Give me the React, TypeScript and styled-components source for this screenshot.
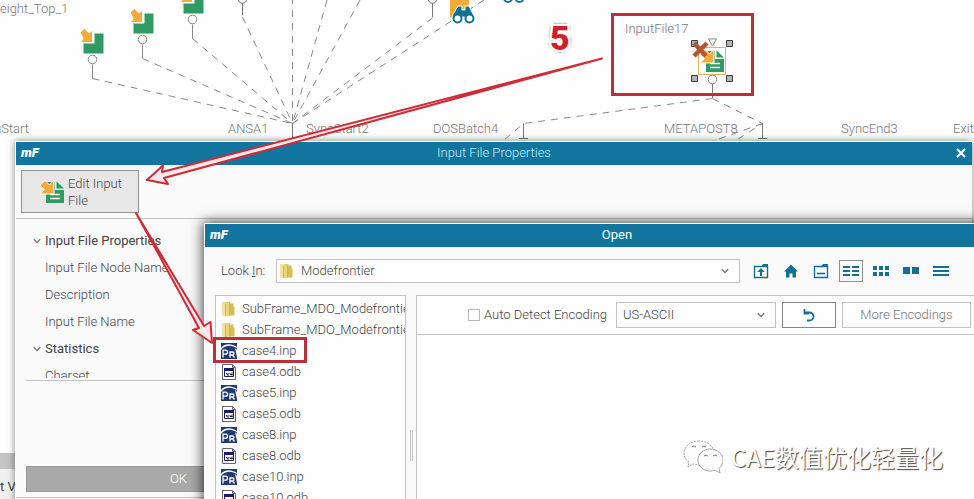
import React from "react";
import styled, { createGlobalStyle, css } from "styled-components";

const teal = "#12759e";
const iconTeal = "#146f94";
const line = "#c3c3c6";
const red = "#b9303a";

const GlobalStyle = createGlobalStyle`
  *, *::before, *::after { box-sizing: border-box; }
  html, body, #root { height: 100%; }
  body {
    margin: 0;
    overflow: hidden;
    background: #fefefe;
    color: #444;
    font: 300 13px/20px Roboto, "Liberation Sans", sans-serif;
  }
  button, select, input { font: inherit; color: inherit; }
  svg { flex: none; }
`;

const Desktop = styled.main`
  position: relative;
  width: 100%;
  height: 100%;
  overflow: hidden;
`;

const Diagram = styled.svg`
  position: absolute;
  top: 0;
  left: 0;
  width: 1200px;
  height: 142px;
`;

const NodeLabel = styled.span<{ $x: number; $y: number }>`
  position: absolute;
  left: ${(p) => p.$x}px;
  top: ${(p) => p.$y}px;
  color: #777;
  white-space: nowrap;
`;

const DockedTab = styled.div`
  position: absolute;
  left: 0;
  top: 453px;
  bottom: 0;
  width: 60px;
  padding-top: 8px;
  border-top: 16px solid #c4c4c4;
  background: #f0f0f0;
  font-weight: 400;
`;

const Window = styled.section<{ $x: number; $y: number; $right: number; $dark?: boolean }>`
  position: absolute;
  left: ${(p) => p.$x}px;
  top: ${(p) => p.$y}px;
  right: ${(p) => p.$right}px;
  bottom: -16px;
  display: flex;
  flex-direction: column;
  border-left: 1px solid #fff;
  border-top: 1px solid #fff;
  background: #fafafa;
  box-shadow: ${(p) => (p.$dark ? "0 0 12px 1px rgba(0,0,0,.75)" : "0 0 7px rgba(0,0,0,.5)")};
`;

const TitleBar = styled.header`
  display: grid;
  grid-template-columns: 40px 1fr 40px;
  align-items: center;
  flex: none;
  height: 23px;
  padding-bottom: 1px;
  background: ${teal};
  color: #fff;
`;

const Brand = styled.span`
  padding-left: 5px;
  font: italic 900 13px/20px Roboto, sans-serif;
`;

const Title = styled.h1<{ $muted?: boolean }>`
  margin: 0;
  text-align: center;
  font-size: 13px;
  font-weight: ${(p) => (p.$muted ? 300 : 400)};
  color: ${(p) => (p.$muted ? "#c4ebf4" : "#fff")};
`;

const CloseButton = styled.button`
  display: flex;
  justify-self: end;
  margin-right: 6px;
  padding: 0;
  border: 0;
  background: none;
  color: #fff;
`;

const ActionBar = styled.div`
  flex: none;
  padding: 5px;
  border-bottom: 1px solid ${line};
`;

const EditButton = styled.button`
  display: flex;
  align-items: center;
  gap: 3px;
  width: 118px;
  height: 43px;
  padding: 0 0 0 18px;
  border: 1px solid #919191;
  background: #e7e7e7;
  text-align: left;
  line-height: 17px;
  white-space: nowrap;
`;

const PropertyList = styled.div`
  flex: none;
  display: flex;
  flex-direction: column;
  height: 159px;
  margin: 0 10px;
  padding-top: 8px;
  overflow: hidden;
`;

const Divider = styled.hr`
  flex: none;
  width: auto;
  margin: 2px 10px 0;
  border: 0;
  border-top: 1px solid ${line};
`;

const PropertyRow = styled.div<{ $group?: boolean }>`
  display: flex;
  flex: none;
  align-items: center;
  gap: 4px;
  height: 27px;
  padding-left: ${(p) => (p.$group ? 7 : 19)}px;
  ${(p) => p.$group && css`font-weight: 400;`}
`;

const OkButton = styled.button`
  flex: none;
  height: 26px;
  margin: 85px 10px 0;
  padding: 0 0 0 143px;
  border: 1px solid #999;
  background: #aaa9aa;
  color: #fff;
  text-align: left;
`;

const StatusLine = styled.div`
  flex: none;
  margin-top: 5px;
  border-top: 1px solid ${line};
`;

const LookInBar = styled.div`
  display: flex;
  align-items: center;
  flex: none;
  height: 48px;
  padding-left: 16px;
`;

const LookInLabel = styled.label`
  width: 55px;
`;

const SelectFrame = styled.div<{ $grow?: boolean }>`
  display: flex;
  align-items: center;
  flex: ${(p) => (p.$grow ? "1 1 auto" : "none")};
  width: ${(p) => (p.$grow ? "auto" : "160px")};
  height: ${(p) => (p.$grow ? 24 : 26)}px;
  padding: 0 10px 0 ${(p) => (p.$grow ? 1 : 6)}px;
  gap: 5px;
  border: 1px solid ${line};
  background: #fefefe;
`;

const PlainSelect = styled.select`
  flex: 1;
  min-width: 0;
  padding: 0;
  border: 0;
  outline: 0;
  background: none;
  appearance: none;
`;

const Toolbar = styled.div`
  display: flex;
  gap: 6px;
  flex: none;
  margin: 0 76px 0 9px;
`;

const ToolButton = styled.button<{ $active?: boolean }>`
  display: flex;
  align-items: center;
  justify-content: center;
  width: 24px;
  height: 22px;
  padding: 0;
  border: 1px solid ${(p) => (p.$active ? "#8f8f8f" : "transparent")};
  background: none;
  color: ${iconTeal};
`;

const Panes = styled.div`
  display: flex;
  flex: 1;
  min-height: 0;
  padding-left: 10px;
`;

const FileList = styled.ul`
  flex: none;
  width: 191px;
  margin: 0;
  padding: 2px 0 0 4px;
  border: 1px solid ${line};
  background: #fefefe;
  list-style: none;
  overflow: hidden;
`;

const FileRow = styled.li`
  display: flex;
  align-items: center;
  gap: 4px;
  height: 21px;
  white-space: nowrap;
`;

const Splitter = styled.div`
  display: flex;
  align-items: center;
  justify-content: center;
  width: 10px;

  &::before {
    content: "";
    width: 3px;
    height: 31px;
    margin-top: 80px;
    border: solid ${line};
    border-width: 0 1px;
  }
`;

const Preview = styled.div`
  flex: 1;
  min-width: 0;
  border: 1px solid ${line};
  border-right: 0;
  background: #fefefe;
`;

const EncodingBar = styled.div`
  display: flex;
  align-items: center;
  justify-content: flex-end;
  gap: 6px;
  height: 39px;
  padding-right: 58px;
  border-bottom: 1px solid ${line};
`;

const CheckLabel = styled.label`
  display: flex;
  align-items: center;
  gap: 4px;
  margin-right: 3px;
`;

const CheckBox = styled.input`
  appearance: none;
  width: 12px;
  height: 12px;
  margin: 0;
  border: 1px solid #b9b9b9;
  background: #fff;
`;

const PushButton = styled.button<{ $wide?: boolean }>`
  display: flex;
  align-items: center;
  justify-content: center;
  width: ${(p) => (p.$wide ? 129 : 54)}px;
  height: 26px;
  padding: 0;
  border: 1px solid ${(p) => (p.$wide ? line : "#858585")};
  background: #fefefe;
  color: ${(p) => (p.$wide ? "#777" : iconTeal)};
`;

const Overlay = styled.svg`
  position: absolute;
  inset: 0;
  width: 100%;
  height: 100%;
  pointer-events: none;
`;

const Callout = styled.span`
  position: absolute;
  left: 550px;
  top: 18px;
  color: #d21f2b;
  font: 900 34px/40px Roboto, sans-serif;
  text-shadow: 2px 0 0 #fff, -2px 0 0 #fff, 0 2px 0 #fff, 0 -2px 0 #fff,
    2px 2px 0 #fff, -2px 2px 0 #fff, 2px -2px 0 #fff, -2px -2px 0 #fff,
    3px 0 2px #b9b6cc, -3px 0 2px #b9b6cc, 0 3px 2px #b9b6cc, 0 -3px 2px #b9b6cc;
`;

const Watermark = styled.div`
  position: absolute;
  right: 31px;
  bottom: 22px;
  display: flex;
  align-items: center;
  gap: 8px;
  color: #fdfdfd;
  font: 400 24px/40px "Noto Sans CJK SC", sans-serif;
  text-shadow: 1px 1px 1px #444;
`;

const Chevron = ({ size = 8 }: { size?: number }) => (
  <svg width={size} height={size} viewBox="0 0 8 8" fill="none" stroke="#777" strokeWidth="1.3" aria-hidden>
    <path d="M.8 2.3 4 5.5 7.2 2.3" />
  </svg>
);

const Folder = () => (
  <svg width="18" height="18" viewBox="0 0 18 18" aria-hidden>
    <path d="M9 3.500h4.500v3h1v9H9z" fill="#d8bd55" />
    <path d="M2.500 2h7v13.500h-7z" fill="#e6cf70" />
    <path d="M2.500 2h3v13.500h-3z" fill="#f2e39c" />
    <path d="M5.500 3.500 9.500 2v13l-4 1.500z" fill="#e9d57e" />
    <path d="M9.500 2v13.500M5.500 3.500v12.500" stroke="#c8a945" fill="none" strokeWidth=".7" />
  </svg>
);

const InpIcon = () => (
  <svg width="18" height="18" viewBox="0 0 18 18" aria-hidden>
    <path d="M1 1h16v16H1z" fill="#203a70" />
    <path d="M1 6C4 1.500 11 1 17 5v1.500C12 2.500 5 3 1 8z" fill="#fff" />
    <path d="M15 6 17 8v7z" fill="#fff" />
    <g fill="none" stroke="#fff" strokeWidth="1.3">
      <path d="M3 15.500V8.200h2.500a2 2 0 0 1 0 4H3" />
      <path d="M10 15.500V10h2.500a1.500 1.500 0 0 1 0 3H10M12.500 13l2 2.500" />
    </g>
  </svg>
);

const OdbIcon = () => (
  <svg width="18" height="18" viewBox="0 0 18 18" aria-hidden>
    <path d="M2.500 1.500h10l3 3v12h-13z" fill="#fff" stroke="#666" />
    <path d="M12.500 1.500v3h3" fill="none" stroke="#666" />
    <path d="M4.500 5.500h9v8h-9z" fill="#fff" stroke="#181a70" />
    <path d="M4 5h10v3H4z" fill="#181a70" />
    <path d="M6 10l2 2.500M8 10v2.500M10 10v1.500h2.500M12 9.500v3" stroke="#222" fill="none" />
  </svg>
);

const DocArt = () => (
  <>
    <path d="M6 3h9v8h9v13H6z" fill="#2f9a63" />
    <path d="M16.500 2.500 24 9.500h-7.500z" fill="#2f9a63" />
    <path d="M10 15.500h10M10 19.500h10" stroke="#fff" strokeWidth="1.300" />
    <path d="M0 6 5 1.500l4.500 4.500L14 1v14H0l4.500-4.500z" fill="#f1ab38" stroke="#fff" />
  </>
);

const InputDocIcon = () => (
  <svg width="25" height="26" viewBox="0 0 25 26" aria-hidden>
    <DocArt />
  </svg>
);

const InputNode = ({ x, y }: { x: number; y: number }) => (
  <g transform={`translate(${x} ${y})`}>
    <path d="M-9-26h20v20H-9z" fill="#2f9a63" />
    <path d="M-9-27H2v11H-9z" fill="#fefefe" />
    <path d="m-12-27 4-3.500L-3.500-26-.5-28.500V-17.500h-11l3-3.500z" fill="#f1ab38" />
    <circle r="4.300" fill="#fff" stroke="#888" />
    <path d="M0 5v14" stroke="#888" />
  </g>
);

const Workflow = () => (
  <Diagram viewBox="0 0 1200 142" aria-hidden>
    <g fill="none" stroke="#8b8b8b" strokeDasharray="7 6">
      <path d="M92.500 78.500 292.500 123.500" />
      <path d="M142.500 58.500 292.500 123.500" />
      <path d="M192.500 38.500 292.500 123.500" />
      <path d="M242.500 17 292.500 123.500" />
      <path d="M292.500-3V123.500" />
      <path d="M327 0 292.500 123.500" />
      <path d="M360 0 292.500 123.500" />
      <path d="M432.500 18 292.500 123.500" />
      <path d="M484 0 292.500 123.500" />
      <path d="M712.500 98.500 523.500 123.500 504 140" />
      <path d="M712.500 98.500 762.500 123.500 735 141" />
      <path d="M762.500 123.500 716 140" />
    </g>
    <g fill="none" stroke="#777">
      <path d="M292.500 123.500V142" />
      <path d="M523.500 123.500V138.500M519 138.500h9" />
      <path d="M762.500 123.500V138.500M758 138.500h9" />
      <path d="M242.500 3v12M432.500 3v14" />
      <circle cx="242.500" cy="-1" r="4.300" />
      <circle cx="432.500" cy="-1" r="4.300" />
    </g>
    <InputNode x={92.5} y={59.5} />
    <InputNode x={142.5} y={39.5} />
    <InputNode x={192.5} y={19.5} />
    <path d="M450 0h19v7l-19 11z" fill="#f1ab38" />
    <g fill="#146f94" stroke="#fff">
      <path d="M458 6h4v4h3V6h4l5 10-2 4-8-3h-2l-8 3-2-4z" />
      <g fill="#fff" stroke="#146f94" strokeWidth="2">
        <circle cx="457.500" cy="18.500" r="4" />
        <circle cx="469.500" cy="18.500" r="4" />
        <circle cx="508" cy="-2" r="4" />
        <circle cx="519.500" cy="-2" r="4" />
      </g>
    </g>
    <path d="M712.500 84v14" stroke="#777" />
    <g transform="translate(700 48)">
      <DocArt />
    </g>
    <path d="M698.500 47.500h27v27h-27z" fill="none" stroke="#e3b355" />
    <path d="M708.500 39h8l-4 7z" fill="#fff" stroke="#888" />
    <circle cx="712.500" cy="79.500" r="4.300" fill="#fff" stroke="#888" />
    <g fill="#b4b4b4" stroke="#3c3c3c">
      <path d="M691.500 40.500h6v6h-6zM726.500 40.500h6v6h-6zM691.500 75.500h6v6h-6zM726.500 75.500h6v6h-6z" />
    </g>
    <path d="m694 43 12 13M707 43l-13 13" stroke="#b65332" strokeWidth="4.500" />
  </Diagram>
);

const UpFolder = () => (
  <svg width="16" height="16" viewBox="0 0 16 16" fill="none" stroke="currentColor" aria-hidden>
    <path d="M1.500 3.500h13v11h-13z" strokeWidth="1.400" />
    <path d="M8 4 10 1h5v3z" fill="currentColor" stroke="none" />
    <path d="M8 13V8" strokeWidth="2" />
    <path d="M4.300 9 8 5l3.700 4z" fill="currentColor" stroke="none" />
  </svg>
);
const Home = () => (
  <svg width="16" height="16" viewBox="0 0 16 16" fill="currentColor" aria-hidden>
    <path d="m8 1.500 7 7h-2v6H9.500v-4h-3v4H3v-6H1z" />
  </svg>
);
const NewFolder = () => (
  <svg width="16" height="16" viewBox="0 0 16 16" fill="none" stroke="currentColor" aria-hidden>
    <path d="M1.500 3.500h13v11h-13z" strokeWidth="1.400" />
    <path d="M8 4 10 1h5v3z" fill="currentColor" stroke="none" />
    <path d="M4 10.500h8" strokeWidth="1.600" />
  </svg>
);
const Details = () => (
  <svg width="18" height="14" viewBox="0 0 18 14" fill="currentColor" aria-hidden>
    <path d="M1 2h7v2H1zM10 2h7v2h-7zM1 6h7v2H1zM10 6h7v2h-7zM1 10h7v2H1zM10 10h7v2h-7z" />
  </svg>
);
const SmallGrid = () => (
  <svg width="18" height="14" viewBox="0 0 18 14" fill="currentColor" aria-hidden>
    <path d="M1 2h4v4H1zM7 2h4v4H7zM13 2h4v4h-4zM1 8h4v4H1zM7 8h4v4H7zM13 8h4v4h-4z" />
  </svg>
);
const LargeGrid = () => (
  <svg width="18" height="14" viewBox="0 0 18 14" fill="currentColor" aria-hidden>
    <path d="M1 3h7v7H1zM10 3h7v7h-7z" />
  </svg>
);
const Menu = () => (
  <svg width="18" height="14" viewBox="0 0 18 14" fill="currentColor" aria-hidden>
    <path d="M1 2h16v2H1zM1 6h16v2H1zM1 10h16v2H1z" />
  </svg>
);

const tools = [
  { name: "Up one level", Icon: UpFolder },
  { name: "Home", Icon: Home },
  { name: "New folder", Icon: NewFolder },
  { name: "Details", Icon: Details, active: true },
  { name: "Small icons", Icon: SmallGrid },
  { name: "Large icons", Icon: LargeGrid },
  { name: "List", Icon: Menu },
];

const labels = [
  { text: "eight_Top_1", x: 0, y: -1 },
  { text: "gStart", x: -6, y: 119 },
  { text: "ANSA1", x: 228, y: 119 },
  { text: "SyncStart2", x: 306, y: 119 },
  { text: "DOSBatch4", x: 433, y: 119 },
  { text: "METAPOST8", x: 664, y: 119 },
  { text: "SyncEnd3", x: 841, y: 119 },
  { text: "Exit", x: 953, y: 119 },
  { text: "InputFile17", x: 625, y: 19 },
];

const properties = [
  { text: "Input File Properties", group: true },
  { text: "Input File Node Name" },
  { text: "Description" },
  { text: "Input File Name" },
  { text: "Statistics", group: true },
  { text: "Charset" },
];

const files = [
  { name: "SubFrame_MDO_Modefrontier", Icon: Folder },
  { name: "SubFrame_MDO_Modefrontier", Icon: Folder },
  ...["case4", "case5", "case8", "case10"].flatMap((name) => [
    { name: `${name}.inp`, Icon: InpIcon },
    { name: `${name}.odb`, Icon: OdbIcon },
  ]),
];

export default function App() {
  return (
    <>
      <GlobalStyle />
      <Desktop>
        <Workflow />
        {labels.map((l) => (
          <NodeLabel key={l.text} $x={l.x} $y={l.y}>{l.text}</NodeLabel>
        ))}
        <DockedTab>t V</DockedTab>

        <Window $x={15} $y={141} $right={2} aria-label="Input File Properties">
          <TitleBar>
            <Brand>mF</Brand>
            <Title $muted>Input File Properties</Title>
            <CloseButton aria-label="Close">
              <svg width="10" height="10" viewBox="0 0 10 10" stroke="currentColor" strokeWidth="2" aria-hidden>
                <path d="m1 1 8 8M9 1 1 9" />
              </svg>
            </CloseButton>
          </TitleBar>
          <ActionBar>
            <EditButton>
              <InputDocIcon />
              <span>Edit Input<br />File</span>
            </EditButton>
          </ActionBar>
          <PropertyList>
            {properties.map((p) => (
              <PropertyRow key={p.text} $group={p.group}>
                {p.group && <Chevron />}
                {p.text}
              </PropertyRow>
            ))}
          </PropertyList>
          <Divider />
          <OkButton>OK</OkButton>
          <StatusLine />
        </Window>

        <Window $x={204} $y={223} $right={-55} $dark aria-label="Open">
          <TitleBar>
            <Brand>mF</Brand>
            <Title>Open</Title>
          </TitleBar>
          <LookInBar>
            <LookInLabel htmlFor="look-in">Look <u>I</u>n:</LookInLabel>
            <SelectFrame $grow>
              <Folder />
              <PlainSelect id="look-in">
                <option>Modefrontier</option>
              </PlainSelect>
              <Chevron />
            </SelectFrame>
            <Toolbar>
              {tools.map(({ name, Icon, active }) => (
                <ToolButton key={name} aria-label={name} $active={active}><Icon /></ToolButton>
              ))}
            </Toolbar>
          </LookInBar>
          <Panes>
            <FileList>
              {files.map(({ name, Icon }, i) => (
                <FileRow key={i}><Icon />{name}</FileRow>
              ))}
            </FileList>
            <Splitter />
            <Preview>
              <EncodingBar>
                <CheckLabel>
                  <CheckBox type="checkbox" />
                  Auto Detect Encoding
                </CheckLabel>
                <SelectFrame>
                  <PlainSelect aria-label="Encoding">
                    <option>US-ASCII</option>
                  </PlainSelect>
                  <Chevron />
                </SelectFrame>
                <PushButton aria-label="Reset encoding">
                  <svg width="14" height="14" viewBox="0 0 14 14" fill="none" stroke="currentColor" strokeWidth="1.800" aria-hidden>
                    <path d="M2.500 4.500H7.500a4 4 0 0 1 0 8H5" />
                    <path d="M2.500 1v4.500H7" />
                  </svg>
                </PushButton>
                <PushButton $wide>More Encodings</PushButton>
              </EncodingBar>
            </Preview>
          </Panes>
        </Window>

        <Overlay aria-hidden>
          <g fill="none" stroke={red} strokeWidth="3">
            <path d="M612.500 14.500h140v80h-140z" />
            <path d="M214.500 338.500h91v23h-91z" />
          </g>
          <g fill="#fbe9ea" stroke="#cf2b36" strokeWidth="2" strokeLinejoin="round">
            <path d="M602 58.500 162 172l1-6.500L147 180l21 4-4-6z" />
            <path d="M136 213 199 328l-6 2 19 13-1.500-21-6.500 4z" />
          </g>
        </Overlay>
        <Callout>5</Callout>
        <Watermark>
          <svg width="40" height="34" viewBox="0 0 40 34" fill="#fdfdfd" stroke="#a5a5a5" aria-hidden>
            <path d="M16 1C8 1 1 6 1 13c0 4 2 7 5 9l-1 5 5-3c2 .6 4 .8 6 .8C25 25 31 20 31 13S24 1 16 1z" strokeDasharray="2 1" />
            <path d="M27 9c-7 0-12 5-12 11s5 11 12 11c2 0 3-.3 5-.8l5 2.800-1-4.500c2-2 4-5 4-8.500C40 14 34 9 27 9z" />
            <path d="M9 7l2-1 2 1M19 7l2-1 2 1M21 16l2-1 2 1M30 16l2-1 2 1" fill="none" stroke="#777" />
          </svg>
          CAE数值优化轻量化
        </Watermark>
      </Desktop>
    </>
  );
}
